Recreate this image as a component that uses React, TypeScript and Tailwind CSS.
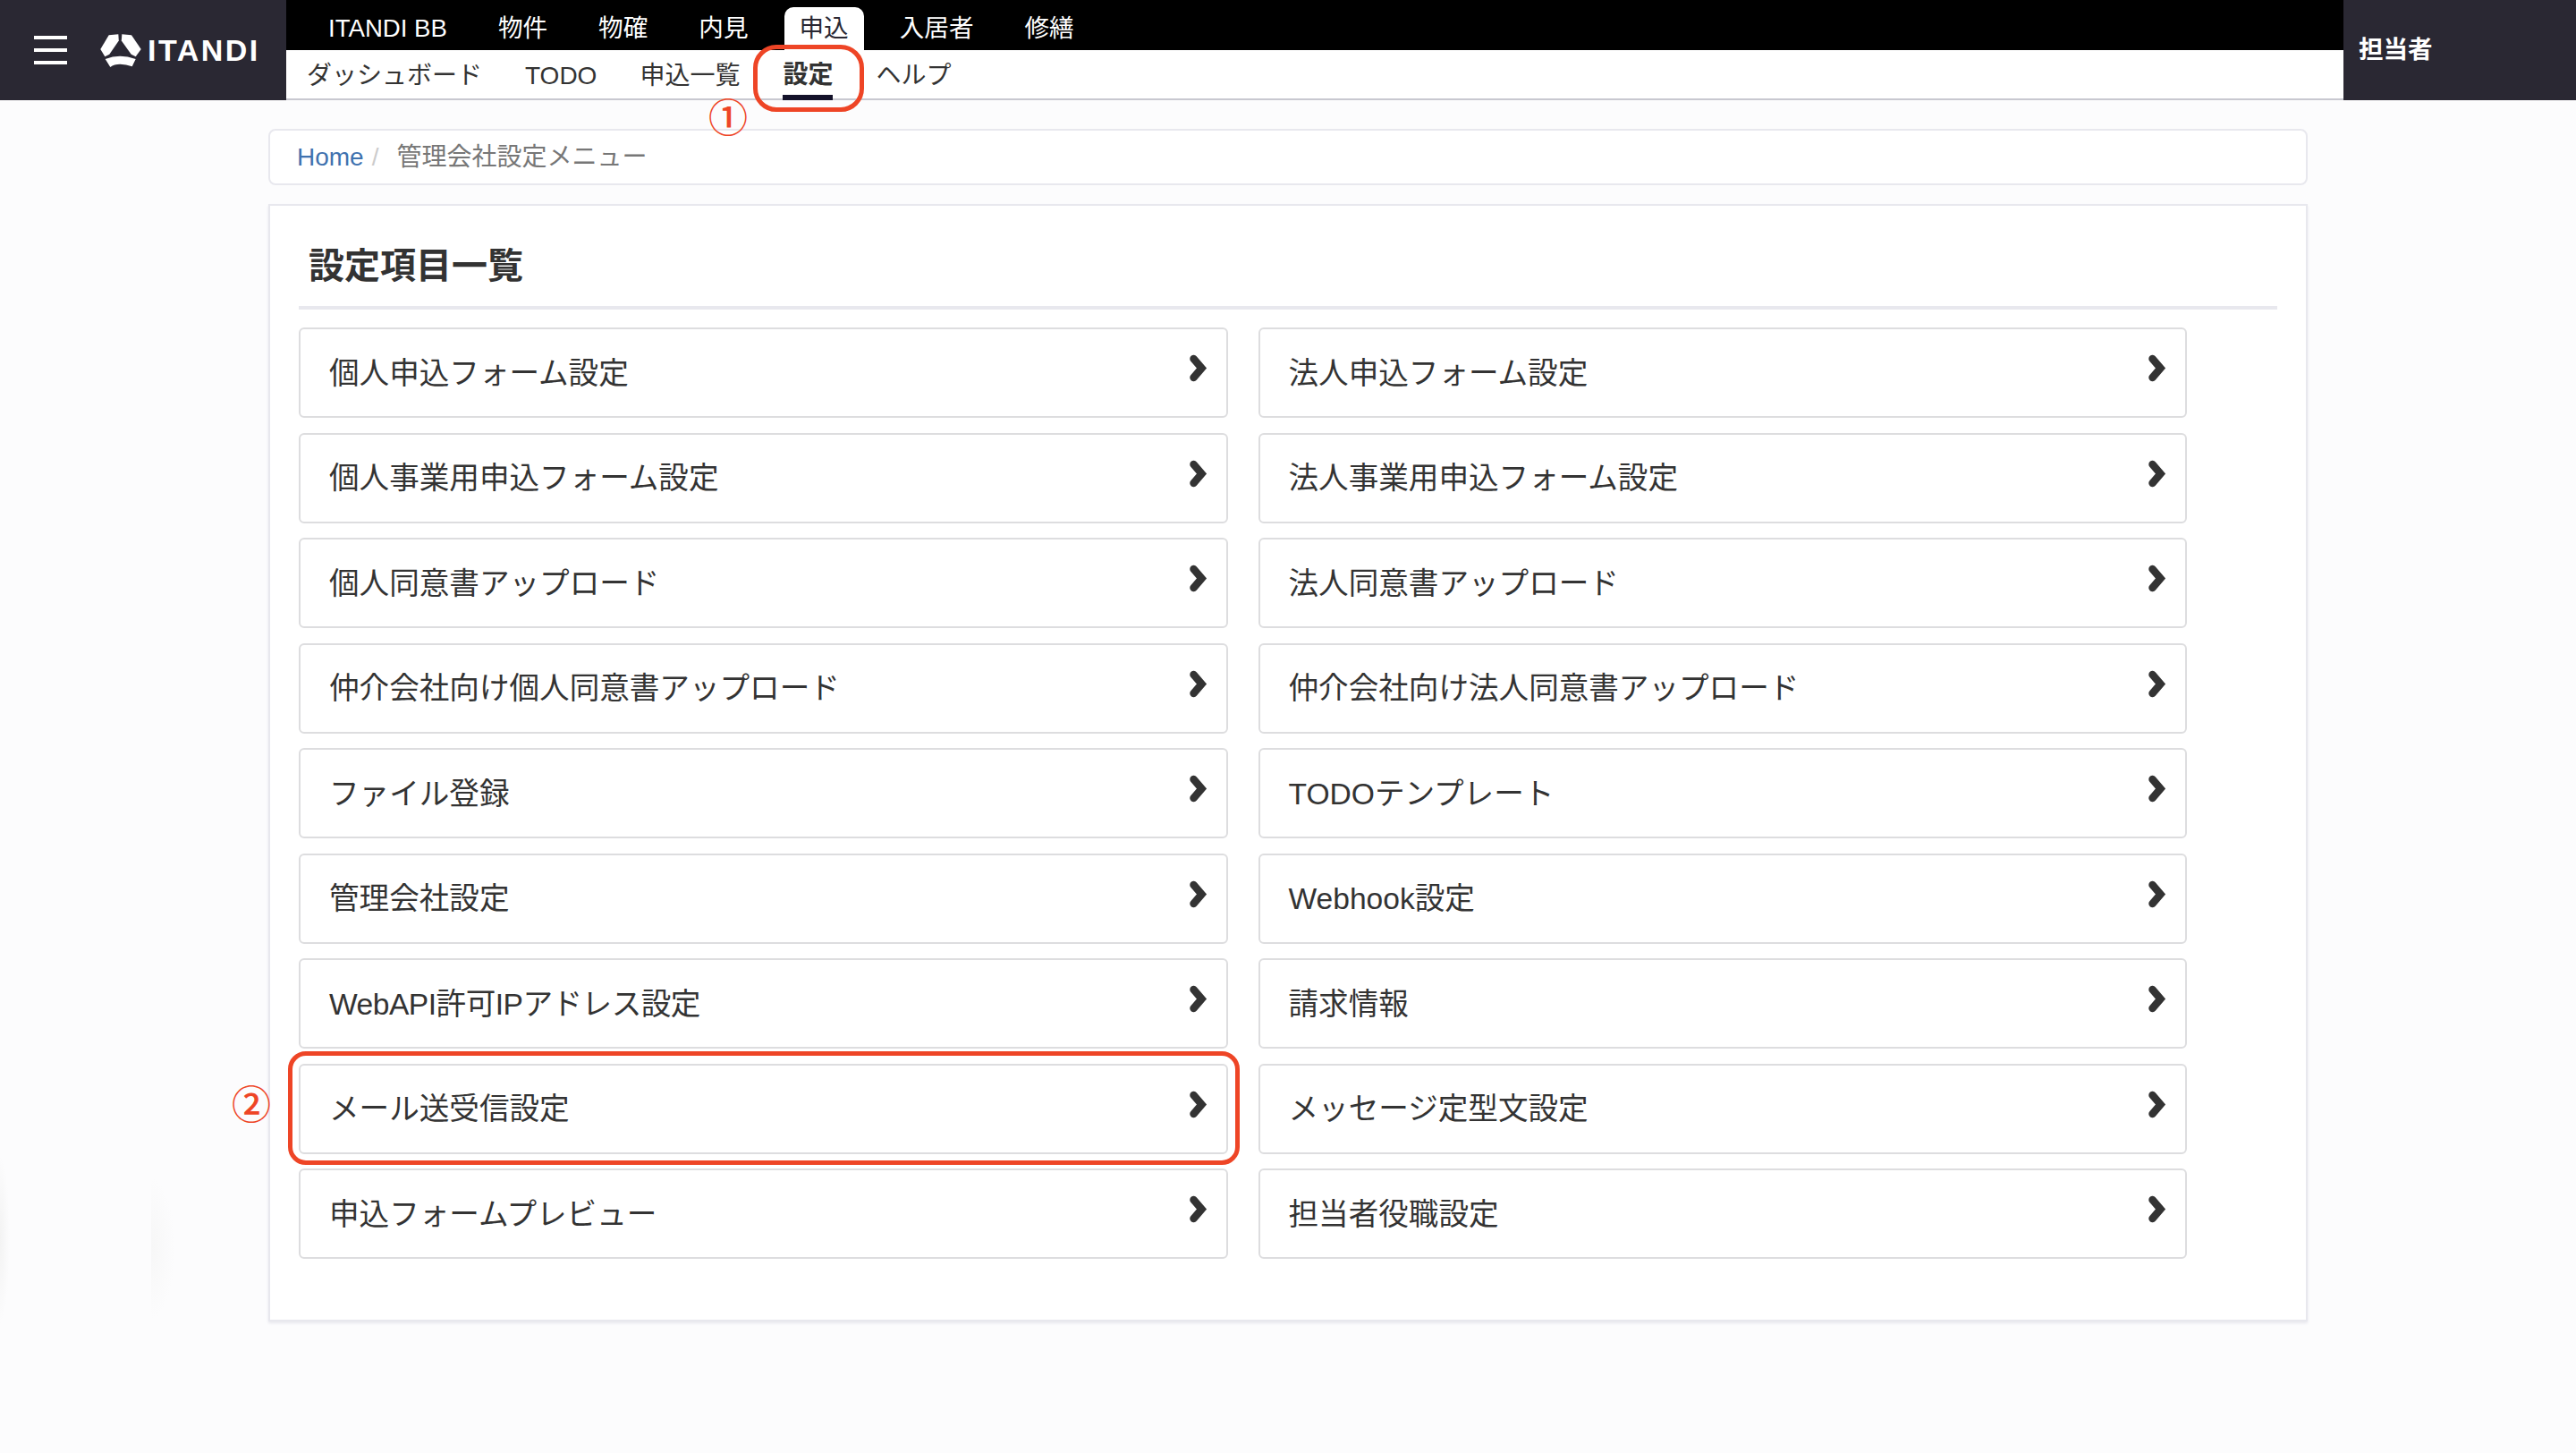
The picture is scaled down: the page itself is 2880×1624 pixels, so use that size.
const FONT = "font-['Liberation_Sans','Noto_Sans_CJK_JP',sans-serif]";

const topNav = ["ITANDI BB", "物件", "物確", "内見", "申込", "入居者", "修繕"];
const subNav = ["ダッシュボード", "TODO", "申込一覧", "設定", "ヘルプ"];

const settings = [
  "個人申込フォーム設定",
  "法人申込フォーム設定",
  "個人事業用申込フォーム設定",
  "法人事業用申込フォーム設定",
  "個人同意書アップロード",
  "法人同意書アップロード",
  "仲介会社向け個人同意書アップロード",
  "仲介会社向け法人同意書アップロード",
  "ファイル登録",
  "TODOテンプレート",
  "管理会社設定",
  "Webhook設定",
  "WebAPI許可IPアドレス設定",
  "請求情報",
  "メール送受信設定",
  "メッセージ定型文設定",
  "申込フォームプレビュー",
  "担当者役職設定",
];

function Logo() {
  return (
    <div className="flex items-center gap-[7px] text-white">
      <svg width="46" height="38" viewBox="0 0 46 38" fill="currentColor">
        <path d="M9.700 2.300 20.300 1.300 20.800 8.500 10.300 23.700 5.300 26.300 0.300 18z" />
        <path d="M35 2.300 24.300 1.300 23.800 8.500 34.700 23.700 39.700 26.300 45.700 18z" />
        <path d="M5.700 29Q14 25.800 22.300 25.800T39.700 29L35.700 37.300Q29 34.700 22.300 34.700T11.300 38z" />
      </svg>
      <span className="text-[34px] leading-none font-bold tracking-[2.500px]">ITANDI</span>
    </div>
  );
}

function Chevron() {
  return (
    <svg
      width="21"
      height="31"
      viewBox="0 0 21 31"
      className="absolute top-[28px] right-[20px] text-[#333]"
      fill="none"
      stroke="currentColor"
      strokeWidth="8.500"
      strokeLinecap="round"
    >
      <path d="M4.500 5 13.500 15.500 4.500 26" />
    </svg>
  );
}

function SettingItem({ label }: { label: string }) {
  return (
    <a className="relative flex h-[101px] items-center rounded-[6px] border-2 border-[#dddddf] bg-white pt-[3px] pl-[32px] text-[33.6px] text-[#333]">
      <span className={label.startsWith("WebAPI") ? "tracking-[-0.5px]" : ""}>{label}</span>
      <Chevron />
    </a>
  );
}

export default function App() {
  return (
    <div className={`relative min-h-[1624px] overflow-hidden bg-[#fcfcfd] ${FONT}`}>
      <header className="flex h-[112px]">
        <div className="flex w-[320px] items-center bg-[#2a2833] pl-[38px]">
          <div className="mr-[37px] flex w-[37px] flex-col gap-[10px]">
            <span className="h-[4px] bg-white" />
            <span className="h-[4px] bg-white" />
            <span className="h-[4px] bg-white" />
          </div>
          <Logo />
        </div>

        <div className="flex flex-1 flex-col">
          <nav className="flex h-[56px] items-end gap-[57px] bg-black pl-[47px] text-[27.6px] text-white">
            {topNav.map((item) =>
              item === "申込" ? (
                <span key={item} className="-mx-[17px] flex h-[48px] items-center rounded-t-[10px] bg-white px-[17px] text-[#2a2833]">
                  {item}
                </span>
              ) : (
                <span key={item} className="flex h-[48px] items-center">
                  {item}
                </span>
              ),
            )}
          </nav>
          <nav className="flex h-[56px] items-stretch gap-[48px] border-b-2 border-[#c8c8d0] bg-white pl-[23px] text-[28px] text-[#333]">
            {subNav.map((item) =>
              item === "設定" ? (
                <span key={item} className="flex h-[56px] items-center border-b-[6px] border-[#14122a] pt-[6px] font-bold text-[#333]">
                  {item}
                </span>
              ) : (
                <span key={item} className="flex items-center pt-[3px]">
                  {item}
                </span>
              ),
            )}
          </nav>
        </div>

        <div className="flex w-[260px] items-center bg-[#2a2833] pl-[17px] text-[27.5px] font-bold text-white">担当者</div>
      </header>

      <main className="mx-[300px]">
        <div className="mt-[32px] flex h-[63px] items-center rounded-[8px] border-2 border-[#e8e8ee] bg-white pt-[1px] pl-[30px] text-[28px]">
          <span className="text-[#3f72af]">Home</span>
          <span className="mr-[20px] ml-[9px] text-[#ccc]">/</span>
          <span className="text-[#777]">管理会社設定メニュー</span>
        </div>

        <section className="mt-[21px] h-[1249px] border-2 border-[#e8e8ee] bg-white px-[32px] shadow-[0_2px_3px_#e8e8ee]">
          <h1 className="flex h-[116px] items-center border-b-4 border-[#e8e8ee] pt-[21px] pl-[11px] text-[40px] font-bold text-[#333]">
            設定項目一覧
          </h1>
          <div className="mt-[20px] grid w-[2111px] grid-cols-2 gap-x-[34px] gap-y-[16.5px]">
            {settings.map((label) => (
              <SettingItem key={label} label={label} />
            ))}
          </div>
        </section>
      </main>

      {/* faint smudges left of the card */}
      <div className="absolute top-[1290px] left-0 h-[190px] w-[11px] bg-[radial-gradient(ellipse_at_left,#f3f3f3,transparent_70%)]" />
      <div className="absolute top-[1315px] left-[169px] h-[160px] w-[27px] bg-[radial-gradient(ellipse_at_left,#f7f7f7,transparent_70%)]" />

      {/* red annotations */}
      <div className="absolute top-[50px] left-[842px] h-[75px] w-[124px] rounded-[26px] border-[5px] border-[#ee4526]" />
      <div className="absolute top-[1175px] left-[322px] h-[127px] w-[1064px] rounded-[20px] border-[5px] border-[#ee4526]" />
      <span className="absolute top-[109px] left-[792px] text-[44px] leading-[48px] font-medium text-[#ee4526]">①</span>
      <span className="absolute top-[1212px] left-[259px] text-[44px] leading-[48px] font-medium text-[#ee4526]">②</span>
    </div>
  );
}
